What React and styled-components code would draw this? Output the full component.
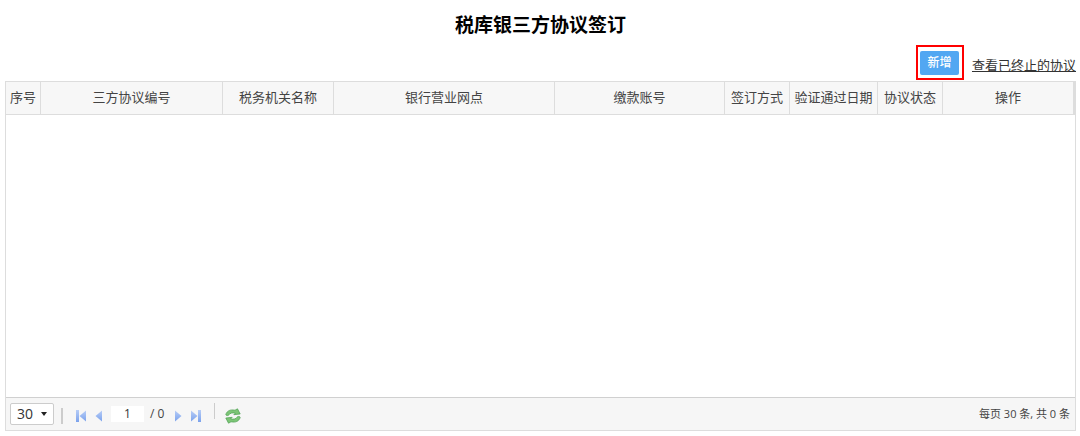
import React, { useState } from "react";
import styled, { createGlobalStyle } from "styled-components";

const GlobalStyle = createGlobalStyle`
  * {
    box-sizing: border-box;
  }
  body {
    margin: 0;
    background-color: #fff;
    font-family: "Open Sans", "Noto Sans CJK SC", sans-serif;
    font-size: 13px;
    color: #444;
  }
`;

// Styled Components
const Page = styled.main`
  padding: 12px 4px 4px 5px;
`;

const Title = styled.h1`
  margin: 0;
  font-size: 19px;
  line-height: 26px;
  text-align: center;
  color: #000;
`;

const Toolbar = styled.div`
  display: flex;
  justify-content: flex-end;
  align-items: center;
  gap: 8px;
  margin-top: 7px;
  padding-bottom: 1px;
`;

const Highlight = styled.div`
  display: flex;
  padding: 4px 3px 3px 2px;
  border: 2px solid #f00;
`;

const AddButton = styled.button`
  width: 39px;
  height: 24px;
  padding: 0;
  border: 0;
  border-radius: 2px;
  background-color: #52a7f2;
  color: #fff;
  font-family: inherit;
  font-size: 12px;
  font-weight: 500;
  line-height: 24px;
  cursor: pointer;
`;

const EndedLink = styled.a`
  padding-top: 4px;
  color: #333;
  line-height: 20px;
  text-decoration: underline;
`;

const Panel = styled.section`
  border: 1px solid #ddd;
`;

const Table = styled.table`
  width: 100%;
  table-layout: fixed;
  border-collapse: separate;
  border-spacing: 0;
`;

const HeadCell = styled.th`
  width: ${({ $width }) => ($width ? `${$width}px` : "auto")};
  height: 33px;
  padding: 0 0 2px;
  border-right: 1px solid #ddd;
  border-bottom: 1px solid #ddd;
  background-color: #f7f7f7;
  font-weight: 400;
  line-height: 20px;
  text-align: center;
  white-space: nowrap;

  &:last-child {
    border-right-width: 2px;
  }
`;

const EmptyCell = styled.td`
  height: 282px;
  padding: 0;
`;

const Footer = styled.footer`
  display: flex;
  align-items: center;
  height: 33px;
  padding: 0 5px 1px 4px;
  border-top: 1px solid #d0d0d0;
  background-color: #f6f6f6;
`;

const SizeBox = styled.div`
  position: relative;
  width: 44px;
  height: 22px;
`;

const SizeSelect = styled.select`
  width: 100%;
  height: 100%;
  padding: 0 0 0 6px;
  appearance: none;
  border: 1px solid #ccc;
  border-radius: 2px;
  background-color: #fff;
  color: #333;
  font-family: inherit;
  font-size: 14px;
`;

const Caret = styled.svg`
  position: absolute;
  top: 9px;
  right: 7px;
  pointer-events: none;
`;

const Divider = styled.span`
  width: ${({ $raised }) => ($raised ? 1 : 2)}px;
  height: 16px;
  margin: ${({ $raised }) => ($raised ? "0 10px 5px 10px" : "4px 10px 0 7px")};
  background-color: #ccc;
`;

const IconButton = styled.button`
  display: flex;
  justify-content: center;
  align-items: center;
  width: 16px;
  height: 16px;
  margin-top: 4px;
  padding: 0;
  border: 0;
  background: none;
  cursor: pointer;
`;

const Pager = styled.div`
  display: flex;
  align-items: center;
  gap: 2px;
`;

const PageInput = styled.input`
  width: 33px;
  height: 16px;
  margin-left: 2px;
  padding: 0;
  border: 0;
  background-color: #fff;
  color: #333;
  font-family: inherit;
  font-size: 12px;
  text-align: center;
`;

const PageTotal = styled.span`
  padding: 0 4px;
  font-size: 12px;
  line-height: 16px;
`;

const Summary = styled.span`
  margin-left: auto;
  font-size: 11px;
  line-height: 16px;
`;

const columns = [
  { label: "序号", width: 35 },
  { label: "三方协议编号", width: 182 },
  { label: "税务机关名称", width: 111 },
  { label: "银行营业网点" },
  { label: "缴款账号", width: 170 },
  { label: "签订方式", width: 65 },
  { label: "验证通过日期", width: 88 },
  { label: "协议状态", width: 65 },
  { label: "操作", width: 132 },
];

const PagerIcon = ({ forward, bar }) => (
  <svg width="12" height="12" viewBox="0 0 12 12" aria-hidden="true">
    <defs>
      <linearGradient id="pagerBlue" x1="0" y1="0" x2="0" y2="1">
        <stop offset="0" stopColor="#b7cdf7" />
        <stop offset="1" stopColor="#7ba2ec" />
      </linearGradient>
    </defs>
    <g transform={forward ? "translate(12 0) scale(-1 1)" : undefined}>
      {bar && <rect x="1" y="0" width="3" height="12" fill="url(#pagerBlue)" />}
      <path
        d={bar ? "M11 .5v11L4.500 6z" : "M9 .5v11L2.500 6z"}
        fill="url(#pagerBlue)"
      />
    </g>
  </svg>
);

const RefreshIcon = () => (
  <svg width="16" height="16" viewBox="0 0 16 16" aria-hidden="true">
    <g fill="#7cc576" stroke="#4c9f50" strokeWidth="0.7" strokeLinejoin="round">
      <path d="M.8 6.500C2 2.700 5.500 1.200 10 2.200L12.500.8 15.200 6 8.800 6.700 10.300 5.200C7.500 4.500 5 5 4 6.800 3.500 7.800 1 8 .8 6.500z" />
      <path d="M15.200 9.500C14 13.300 10.500 14.800 6 13.800L3.500 15.200.8 10 7.200 9.300 5.700 10.800C8.500 11.500 11 11 12 9.200 12.500 8.200 15 8 15.200 9.500z" />
    </g>
  </svg>
);

const App = () => {
  const [page, setPage] = useState("1");

  return (
    <Page>
      <GlobalStyle />
      <Title>税库银三方协议签订</Title>

      {/* Actions */}
      <Toolbar>
        <Highlight>
          <AddButton type="button">新增</AddButton>
        </Highlight>
        <EndedLink href="#ended">查看已终止的协议</EndedLink>
      </Toolbar>

      {/* Agreement list */}
      <Panel>
        <Table>
          <thead>
            <tr>
              {columns.map((column) => (
                <HeadCell key={column.label} $width={column.width} scope="col">
                  {column.label}
                </HeadCell>
              ))}
            </tr>
          </thead>
          <tbody>
            <tr>
              <EmptyCell colSpan={columns.length} />
            </tr>
          </tbody>
        </Table>

        {/* Pagination */}
        <Footer>
          <SizeBox>
            <SizeSelect aria-label="每页条数" defaultValue="30">
              <option value="30">30</option>
              <option value="50">50</option>
            </SizeSelect>
            <Caret width="6" height="4" viewBox="0 0 6 4" aria-hidden="true">
              <path d="M0 0h6L3 4z" fill="#222" />
            </Caret>
          </SizeBox>
          <Divider />
          <Pager>
            <IconButton type="button" aria-label="首页">
              <PagerIcon bar />
            </IconButton>
            <IconButton type="button" aria-label="上一页">
              <PagerIcon />
            </IconButton>
            <PageInput
              type="text"
              aria-label="页码"
              value={page}
              onChange={(e) => setPage(e.target.value)}
            />
            <PageTotal>/ 0</PageTotal>
            <IconButton type="button" aria-label="下一页">
              <PagerIcon forward />
            </IconButton>
            <IconButton type="button" aria-label="末页">
              <PagerIcon forward bar />
            </IconButton>
          </Pager>
          <Divider $raised />
          <IconButton type="button" aria-label="刷新">
            <RefreshIcon />
          </IconButton>
          <Summary>每页 30 条, 共 0 条</Summary>
        </Footer>
      </Panel>
    </Page>
  );
};

export default App;
